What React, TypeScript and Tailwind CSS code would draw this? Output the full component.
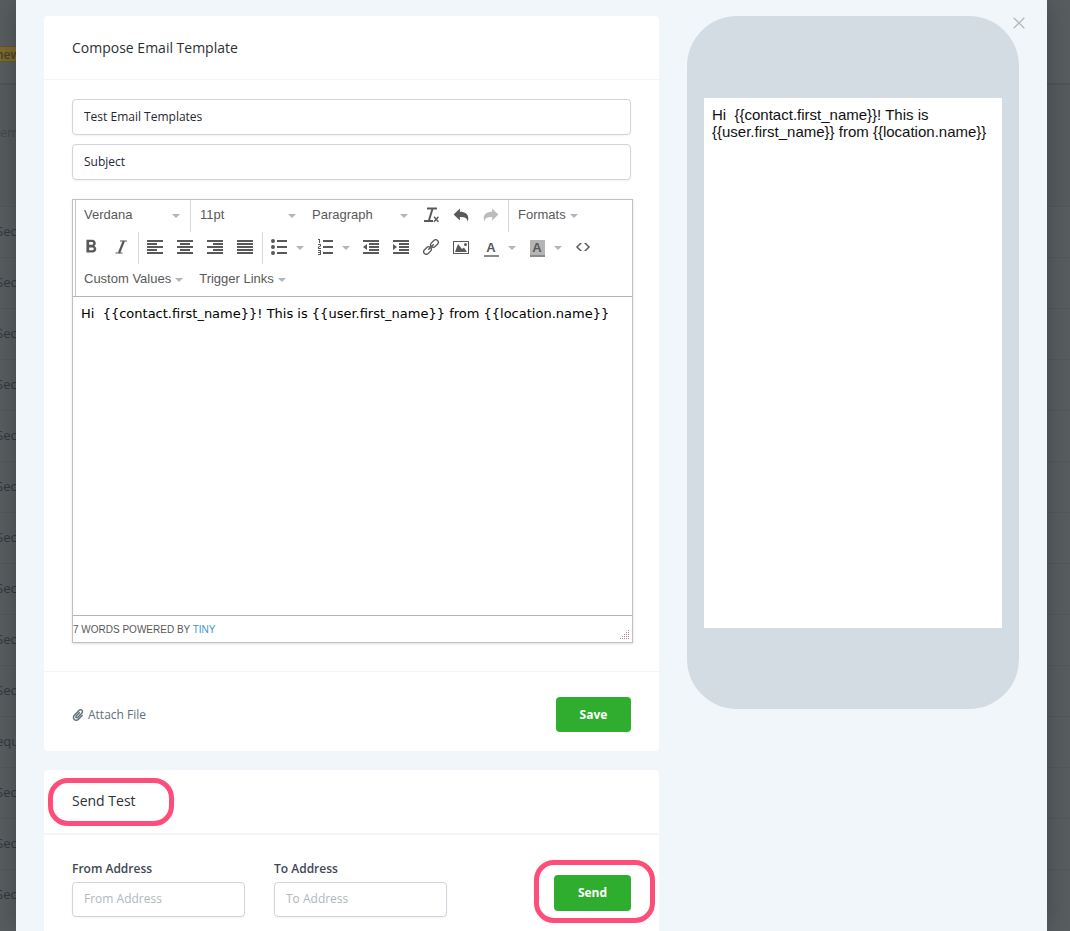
import { useState } from "react";
import type { ReactNode } from "react";
import { FaPaperclip } from "react-icons/fa";
import { MdFormatBold } from "react-icons/md";

const BODY_TEXT = "Hi  {{contact.first_name}}! This is {{user.first_name}} from {{location.name}}";

const BACKDROP_ROWS = ["Sec", "Sec", "Sec", "Sec", "Sec", "Sec", "Sec", "Sec", "Sec", "Sec", "equ", "Sec", "Sec", "Sec"];

const ICONS = {
    undo: "M40 480L440 90v215c340 0 540 160 540 420 0 80-20 150-60 215 10-220-140-300-480-300v230z",
    redo: "M984 480L584 90v215c-340 0-540 160-540 420 0 80 20 150 60 215-10-220 140-300 480-300v230z",
    alignLeft: "M0 64h1024v128h-1024zM0 256h640v128h-640zM0 448h1024v128h-1024zM0 640h640v128h-640zM0 832h1024v128h-1024z",
    alignCenter: "M0 64h1024v128h-1024zM192 256h640v128h-640zM0 448h1024v128h-1024zM192 640h640v128h-640zM0 832h1024v128h-1024z",
    alignRight: "M0 64h1024v128h-1024zM384 256h640v128h-640zM0 448h1024v128h-1024zM384 640h640v128h-640zM0 832h1024v128h-1024z",
    alignJustify: "M0 64h1024v128h-1024zM0 256h1024v128h-1024zM0 448h1024v128h-1024zM0 640h1024v128h-1024zM0 832h1024v128h-1024z",
    bullets: "M384 64h640v128h-640zM384 448h640v128h-640zM384 832h640v128h-640zM0 128a128 128 0 1 0 256 0a128 128 0 1 0-256 0zM0 512a128 128 0 1 0 256 0a128 128 0 1 0-256 0zM0 896a128 128 0 1 0 256 0a128 128 0 1 0-256 0z",
    numbers: "M384 832h640v128h-640zM384 448h640v128h-640zM384 64h640v128h-640zM192 0v256h-64v-192h-64v-64zM128 526v50h128v64h-192v-146l128-60v-50h-128v-64h192v146zM256 704v320h-192v-64h128v-64h-128v-64h128v-64h-128v-64z",
    outdent: "M0 64h1024v128h-1024zM384 256h640v128h-640zM384 448h640v128h-640zM384 640h640v128h-640zM0 832h1024v128h-1024zM256 320v384l-256-192z",
    indent: "M0 64h1024v128h-1024zM384 256h640v128h-640zM384 448h640v128h-640zM384 640h640v128h-640zM0 832h1024v128h-1024zM0 704v-384l256 192z",
    image: "M0 128v832h1024v-832zM960 896h-896v-704h896zM704 352a96 96 0 1 0 192 0a96 96 0 1 0-192 0zM896 832h-768l192-512 256 320 128-96z",
    code: "M320 256l-256 256 256 256h128l-256-256 256-256zM704 256h-128l256 256-256 256h128l256-256z",
};

function Icon({ name }: { name: keyof typeof ICONS }) {
    return (
        <svg viewBox="0 0 1024 1024" className="w-4 h-4" fill="currentColor" fillRule="evenodd" aria-hidden="true">
            <path d={ICONS[name]} />
        </svg>
    );
}

function Caret() {
    return (
        <svg viewBox="0 0 8 4" className="w-2 h-1 shrink-0 text-[#b0b6bb]" fill="currentColor" aria-hidden="true">
            <path d="M0 0h8L4 4z" />
        </svg>
    );
}

function ToolButton({ label, disabled, children }: { label: string; disabled?: boolean; children: ReactNode }) {
    return (
        <button
            type="button"
            aria-label={label}
            disabled={disabled}
            className="w-[30px] h-8 pb-0.5 flex items-center justify-center disabled:opacity-40"
        >
            {children}
        </button>
    );
}

function SplitButton({ label, children }: { label: string; children: ReactNode }) {
    return (
        <div className="flex">
            <ToolButton label={label}>{children}</ToolButton>
            <button type="button" aria-label={`${label} options`} className="w-4 h-8 pr-1 flex items-center justify-center">
                <Caret />
            </button>
        </div>
    );
}

function ToolSelect({ label, options }: { label: string; options: string[] }) {
    return (
        <div className="relative w-28 h-8">
            <select aria-label={label} className="w-full h-8 pl-2 pr-5 pb-0.5 appearance-none bg-transparent outline-none">
                {options.map((option) => (
                    <option key={option}>{option}</option>
                ))}
            </select>
            <span className="absolute right-2 top-3.5 flex pointer-events-none">
                <Caret />
            </span>
        </div>
    );
}

function MenuButton({ children }: { children: ReactNode }) {
    return (
        <button type="button" className="h-8 px-2 flex items-center gap-1">
            <span className="pb-0.5">{children}</span>
            <Caret />
        </button>
    );
}

function ToolGroup({ children }: { children: ReactNode }) {
    return <div className="flex pr-0.5 not-first:border-l not-first:border-[#d5d7d9] not-first:pl-px">{children}</div>;
}

function Toolbar() {
    return (
        <div className="ml-0.5 border-l border-[#c5c5c5] text-[13px] text-[#595959]">
            <div className="flex">
                <ToolGroup>
                    <ToolSelect label="Font" options={["Verdana", "Arial", "Georgia"]} />
                </ToolGroup>
                <ToolGroup>
                    <ToolSelect label="Font size" options={["11pt", "12pt", "14pt"]} />
                    <ToolSelect label="Block" options={["Paragraph", "Heading 1", "Heading 2"]} />
                    <ToolButton label="Clear formatting">
                        <svg viewBox="0 0 16 16" className="w-4 h-4" fill="none" stroke="currentColor" aria-hidden="true">
                            <path d="M4 1.5h10" strokeWidth="2" />
                            <path d="M9.5 2L6 13" strokeWidth="2" />
                            <path d="M1 14h9" strokeWidth="2" />
                            <path d="M11 9.8l4.4 5M15.4 9.8l-4.4 5" strokeWidth="1.4" />
                        </svg>
                    </ToolButton>
                    <ToolButton label="Undo">
                        <Icon name="undo" />
                    </ToolButton>
                    <ToolButton label="Redo" disabled>
                        <Icon name="redo" />
                    </ToolButton>
                </ToolGroup>
                <ToolGroup>
                    <MenuButton>Formats</MenuButton>
                </ToolGroup>
            </div>
            <div className="flex">
                <ToolGroup>
                    <ToolButton label="Bold">
                        <MdFormatBold className="w-[22px] h-[22px]" />
                    </ToolButton>
                    <ToolButton label="Italic">
                        <svg viewBox="0 0 16 16" className="w-4 h-4" fill="none" stroke="currentColor" aria-hidden="true">
                            <path d="M7 2h7M2.5 14h7" strokeWidth="1.2" />
                            <path d="M10.8 2L6 14" strokeWidth="2.2" />
                        </svg>
                    </ToolButton>
                </ToolGroup>
                <ToolGroup>
                    <ToolButton label="Align left">
                        <Icon name="alignLeft" />
                    </ToolButton>
                    <ToolButton label="Align center">
                        <Icon name="alignCenter" />
                    </ToolButton>
                    <ToolButton label="Align right">
                        <Icon name="alignRight" />
                    </ToolButton>
                    <ToolButton label="Justify">
                        <Icon name="alignJustify" />
                    </ToolButton>
                </ToolGroup>
                <ToolGroup>
                    <SplitButton label="Bullet list">
                        <Icon name="bullets" />
                    </SplitButton>
                    <SplitButton label="Numbered list">
                        <Icon name="numbers" />
                    </SplitButton>
                    <ToolButton label="Decrease indent">
                        <Icon name="outdent" />
                    </ToolButton>
                    <ToolButton label="Increase indent">
                        <Icon name="indent" />
                    </ToolButton>
                    <ToolButton label="Insert link">
                        <svg viewBox="0 0 16 16" className="w-4 h-4" fill="none" stroke="currentColor" strokeWidth="1.3" aria-hidden="true">
                            <g transform="rotate(-45 8 8)">
                                <rect x="-1.2" y="5.4" width="8.6" height="5.2" rx="2.6" />
                                <rect x="8.6" y="5.4" width="8.6" height="5.2" rx="2.6" />
                                <path d="M4.8 8h6.4" strokeWidth="1.5" strokeLinecap="round" />
                            </g>
                        </svg>
                    </ToolButton>
                    <ToolButton label="Insert image">
                        <Icon name="image" />
                    </ToolButton>
                    <SplitButton label="Text color">
                        <span className="w-[15px] h-[17px] mt-0.5 border-b-2 border-[#8a8a8a] text-[13px] leading-[15px] font-bold">A</span>
                    </SplitButton>
                    <SplitButton label="Background color">
                        <span className="w-[15px] h-[17px] mt-0.5 border-b-2 border-[#8a8a8a] bg-[#b5b5b5] text-[13px] leading-[15px] font-bold">A</span>
                    </SplitButton>
                    <ToolButton label="Source code">
                        <Icon name="code" />
                    </ToolButton>
                </ToolGroup>
            </div>
            <div className="flex">
                <MenuButton>Custom Values</MenuButton>
                <MenuButton>Trigger Links</MenuButton>
            </div>
        </div>
    );
}

function Editor({ value, onChange }: { value: string; onChange: (value: string) => void }) {
    return (
        <div className="mt-[19px] -mr-0.5 border border-[#c0c0c0] shadow-sm font-['Liberation_Sans',sans-serif]">
            <Toolbar />
            <textarea
                aria-label="Email body"
                value={value}
                onChange={(e) => onChange(e.target.value)}
                className="block w-full h-80 px-2 py-[7px] border-y border-[#b5b5b5] resize-none outline-none font-['DejaVu_Sans',sans-serif] text-[13px] leading-5 text-black"
            />
            <div className="h-[26px] flex items-center justify-between text-[10px] text-[#595959]">
                <p>
                    7 WORDS POWERED BY{" "}
                    <a href="#tiny" className="text-[#3f95d8]">
                        TINY
                    </a>
                </p>
                <svg viewBox="0 0 10 10" className="w-2.5 h-2.5 mr-0.5 mt-3 text-[#b08c98]" fill="currentColor" aria-hidden="true">
                    <path d="M8 0h1v1H8zM8 2h1v1H8zM6 2h1v1H6zM8 4h1v1H8zM6 4h1v1H6zM4 4h1v1H4zM8 6h1v1H8zM6 6h1v1H6zM4 6h1v1H4zM2 6h1v1H2zM8 8h1v1H8zM6 8h1v1H6zM4 8h1v1H4zM2 8h1v1H2zM0 8h1v1H0z" />
                </svg>
            </div>
        </div>
    );
}

// the dimmed page behind the modal
function Backdrop({ className, showText }: { className: string; showText?: boolean }) {
    return (
        <div className={`shrink-0 overflow-hidden bg-[#585d60] text-[13px] text-[#33383e] ${className}`} aria-hidden="true">
            <div className="h-[85px] pt-[46px] border-b-2 border-[#505558]">
                {showText && (
                    <div className="h-4 -ml-1 border-y border-[#6a5722] bg-[#7d6a33] text-xs leading-4 font-semibold text-[#4a4022]">new</div>
                )}
            </div>
            <div className="h-[121px] pt-[38px] bg-[#565b5e] text-[#454a4d]">{showText && "em"}</div>
            {BACKDROP_ROWS.map((text, i) => (
                <div key={i} className="h-[51px] flex items-center border-t border-[#53585b]">
                    {showText && <span className="-ml-1">{text}</span>}
                </div>
            ))}
        </div>
    );
}

export default function App() {
    const [name, setName] = useState("Test Email Templates");
    const [subject, setSubject] = useState("Subject");
    const [body, setBody] = useState(BODY_TEXT);

    const inputClass =
        "w-full border border-[#d2d3dc] rounded px-[11px] pb-0.5 text-xs shadow-xs outline-none placeholder:text-[#afb8bc]";
    const buttonClass = "rounded bg-[#2fad2f] text-xs font-bold text-white";

    return (
        <div className="h-screen flex overflow-hidden font-['Open_Sans',sans-serif] text-[#2a3135]">
            <Backdrop className="w-4" showText />
            <main className="relative z-10 flex-1 min-w-0 flex items-start gap-7 px-7 py-4 bg-[#f1f6fa] shadow-[0_0_24px_rgba(0,0,0,0.25)]">
                <div className="flex-1 min-w-0">
                    <section className="bg-white rounded">
                        <header className="h-16 flex items-center px-7 border-b border-[#f2f5f7]">
                            <h2 className="text-sm">Compose Email Template</h2>
                        </header>
                        <div className="px-7 pt-[19px] pb-7">
                            <div className="flex flex-col gap-[9px] text-[#1f2733]">
                                <input
                                    aria-label="Template name"
                                    value={name}
                                    onChange={(e) => setName(e.target.value)}
                                    className={`h-9 ${inputClass}`}
                                />
                                <input
                                    aria-label="Subject"
                                    value={subject}
                                    onChange={(e) => setSubject(e.target.value)}
                                    className={`h-9 ${inputClass}`}
                                />
                            </div>
                            <Editor value={body} onChange={setBody} />
                        </div>
                        <footer className="h-20 flex items-center justify-between px-7 pt-1.5 border-t border-[#f2f5f7]">
                            <button type="button" className="flex items-center gap-1 text-xs text-[#607179]">
                                <FaPaperclip className="w-3 h-3" />
                                Attach File
                            </button>
                            <button type="button" className={`w-[75px] h-[35px] ${buttonClass}`}>
                                Save
                            </button>
                        </footer>
                    </section>

                    <section className="mt-[19px] bg-white rounded">
                        <header className="h-[65px] flex items-center px-7 pb-0.5 border-b-2 border-[#f1f6fa]">
                            <h2 className="relative text-sm">
                                Send Test
                                <span className="absolute -left-6 -right-[38px] -top-[13px] -bottom-[15px] border-5 border-[#ff4d79] rounded-[20px] pointer-events-none" />
                            </h2>
                        </header>
                        <form className="flex items-start gap-[29px] px-7 pt-6 pb-7" onSubmit={(e) => e.preventDefault()}>
                            <label className="w-[173px] text-xs leading-5 font-semibold text-[#3f4756]">
                                From Address
                                <input placeholder="From Address" className={`mt-[3px] h-[35px] font-normal ${inputClass}`} />
                            </label>
                            <label className="w-[173px] text-xs leading-5 font-semibold text-[#3f4756]">
                                To Address
                                <input placeholder="To Address" className={`mt-[3px] h-[35px] font-normal ${inputClass}`} />
                            </label>
                            <div className="relative ml-auto mt-4">
                                <button type="submit" className={`block w-[77px] h-9 ${buttonClass}`}>
                                    Send
                                </button>
                                <span className="absolute -left-5 -right-6 -top-[15px] -bottom-3 border-5 border-[#ff4d79] rounded-[20px] pointer-events-none" />
                            </div>
                        </form>
                    </section>
                </div>

                <aside className="w-[332px] shrink-0 rounded-[50px] bg-[#d3dbe3] px-[17px] pt-[82px] pb-[81px]">
                    <div className="h-[530px] bg-white p-2 font-['Liberation_Sans',sans-serif] text-[15px] leading-[17px] text-[#111] whitespace-pre-wrap">
                        {body}
                    </div>
                </aside>

                <button type="button" aria-label="Close" className="absolute top-[17px] right-[22px] text-[#b4babe]">
                    <svg viewBox="0 0 12 12" className="w-3 h-3" fill="none" stroke="currentColor" strokeWidth="1.4" aria-hidden="true">
                        <path d="M.7 .7l10.6 10.6M11.3 .7L.7 11.3" />
                    </svg>
                </button>
            </main>
            <Backdrop className="w-[23px]" />
        </div>
    );
}
